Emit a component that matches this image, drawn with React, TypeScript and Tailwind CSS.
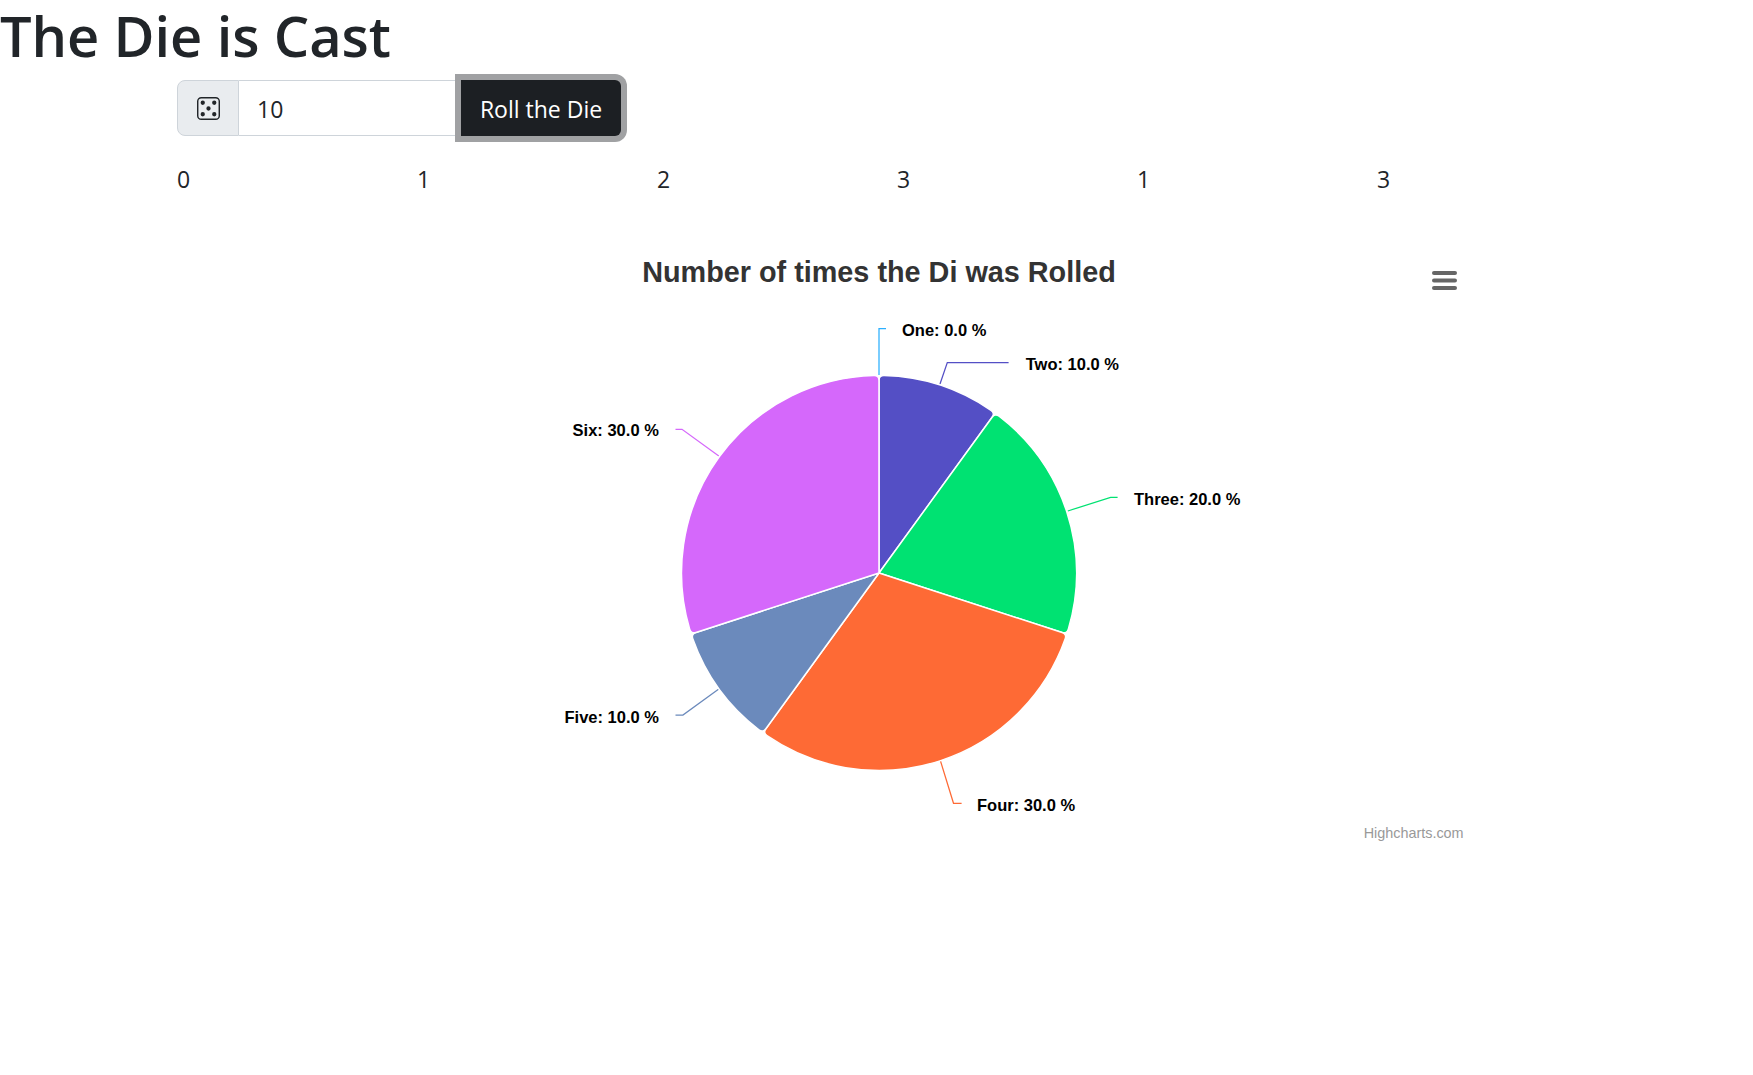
import React from "react";

const CX = 879;
const CY = 573;
const R = 197.5;

function pt(deg: number, r: number): [number, number] {
  const a = (deg * Math.PI) / 180;
  return [CX + r * Math.sin(a), CY - r * Math.cos(a)];
}

function sector(a0: number, a1: number): string {
  const c = 5;
  const da = (c / R) * (180 / Math.PI);
  const f = (p: [number, number]) => `${p[0].toFixed(2)} ${p[1].toFixed(2)}`;
  const large = a1 - a0 - 2 * da > 180 ? 1 : 0;
  return [
    `M ${CX} ${CY}`,
    `L ${f(pt(a0, R - c))}`,
    `Q ${f(pt(a0, R))} ${f(pt(a0 + da, R))}`,
    `A ${R} ${R} 0 ${large} 1 ${f(pt(a1 - da, R))}`,
    `Q ${f(pt(a1, R))} ${f(pt(a1, R - c))}`,
    "Z",
  ].join(" ");
}

const slices = [
  { a0: 0, a1: 36, color: "#544fc5" },
  { a0: 36, a1: 108, color: "#00e272" },
  { a0: 108, a1: 216, color: "#fe6a35" },
  { a0: 216, a1: 252, color: "#6b8abc" },
  { a0: 252, a1: 360, color: "#d568fb" },
];

const connectors = [
  { d: "M879 375 L879 328.5 L886 328.5", color: "#2caffe" },
  { d: "M940 384 L947.3 362.5 L1008.6 362.5", color: "#544fc5" },
  { d: "M1067.8 511 L1110.6 497.3 L1117.6 497.3", color: "#00e272" },
  { d: "M940.4 760.7 L953.5 803.3 L961.6 803.3", color: "#fe6a35" },
  { d: "M718.8 689 L682.9 715 L675.5 715", color: "#6b8abc" },
  { d: "M718.8 456 L682 429.3 L675.5 429.3", color: "#d568fb" },
];

const labels = [
  { text: "One: 0.0 %", x: 902, y: 336 },
  { text: "Two: 10.0 %", x: 1025.7, y: 369.5 },
  { text: "Three: 20.0 %", x: 1134, y: 505 },
  { text: "Four: 30.0 %", x: 977, y: 810.5 },
  { text: "Five: 10.0 %", x: 564.5, y: 722.5 },
  { text: "Six: 30.0 %", x: 572.6, y: 436 },
];

const rolls = [0, 1, 2, 3, 1, 3];

export default function App() {
  const sans = "font-['Open_Sans',sans-serif]";
  return (
    <div className={`min-h-[1075px] bg-white text-[#212529] ${sans}`}>
      <h1 className="h-[76px] -mt-[2px] text-[56px] leading-[74px] font-semibold tracking-[-0.1px] whitespace-nowrap">
        The Die is Cast
      </h1>
      <div className="ml-[177px] flex w-[450px] h-[68px] items-center">
        <div className="flex h-[56px] w-[62px] shrink-0 items-center justify-center rounded-l-lg border border-[#ced4da] bg-[#e9ecef]">
          <svg width="23" height="23" viewBox="0 0 16 16" fill="#212529">
            <path d="M13 1a2 2 0 0 1 2 2v10a2 2 0 0 1-2 2H3a2 2 0 0 1-2-2V3a2 2 0 0 1 2-2h10zM3 0a3 3 0 0 0-3 3v10a3 3 0 0 0 3 3h10a3 3 0 0 0 3-3V3a3 3 0 0 0-3-3H3z" />
            <path d="M5.5 4a1.5 1.5 0 1 1-3 0 1.5 1.5 0 0 1 3 0zm8 0a1.5 1.5 0 1 1-3 0 1.5 1.5 0 0 1 3 0zm0 8a1.5 1.5 0 1 1-3 0 1.5 1.5 0 0 1 3 0zm-8 0a1.5 1.5 0 1 1-3 0 1.5 1.5 0 0 1 3 0zm4-4a1.5 1.5 0 1 1-3 0 1.5 1.5 0 0 1 3 0z" />
          </svg>
        </div>
        <div className="flex h-[56px] w-[222px] shrink-0 items-center border-y border-[#ced4da] bg-white pl-[18px] pt-[2px] text-[23px]">
          10
        </div>
        <button className="flex h-[56px] w-[160px] shrink-0 items-center justify-center rounded-r-md bg-[#1c1f23] pt-[2px] text-[23px] tracking-[0px] text-white shadow-[0_0_0_6px_#a0a1a3] whitespace-nowrap">
          Roll the Die
        </button>
      </div>
      <div className="ml-[177px] mt-[21px] grid w-[1440px] grid-cols-6 text-[23px] leading-[32px]">
        {rolls.map((n, i) => (
          <div key={i}>{n}</div>
        ))}
      </div>
      <svg
        className="mt-[35px] ml-[165px] block"
        width="1320"
        height="620"
        viewBox="165 230 1320 620"
      >
        <text
          x={CX}
          y={281.5}
          textAnchor="middle"
          fill="#333333"
          fontFamily="'Liberation Sans', sans-serif"
          fontWeight="700"
          fontSize="28.8"
        >
          Number of times the Di was Rolled
        </text>
        <g fill="#666666">
          <rect x="1432" y="271" width="25" height="4" rx="2" />
          <rect x="1432" y="278.5" width="25" height="4" rx="2" />
          <rect x="1432" y="286" width="25" height="4" rx="2" />
        </g>
        {connectors.map((c, i) => (
          <path key={i} d={c.d} fill="none" stroke={c.color} strokeWidth="1.25" />
        ))}
        {slices.map((s, i) => (
          <path key={i} d={sector(s.a0, s.a1)} fill={s.color} stroke="#ffffff" strokeWidth="1.5" strokeLinejoin="round" />
        ))}
        {labels.map((l, i) => (
          <text
            key={i}
            x={l.x}
            y={l.y}
            fill="#000000"
            fontFamily="'Liberation Sans', sans-serif"
            fontWeight="700"
            fontSize="16.5"
          >
            {l.text}
          </text>
        ))}
        <text
          x={1463.6}
          y={837.5}
          textAnchor="end"
          fill="#999999"
          fontFamily="'Liberation Sans', sans-serif"
          fontSize="14.4"
        >
          Highcharts.com
        </text>
      </svg>
    </div>
  );
}
